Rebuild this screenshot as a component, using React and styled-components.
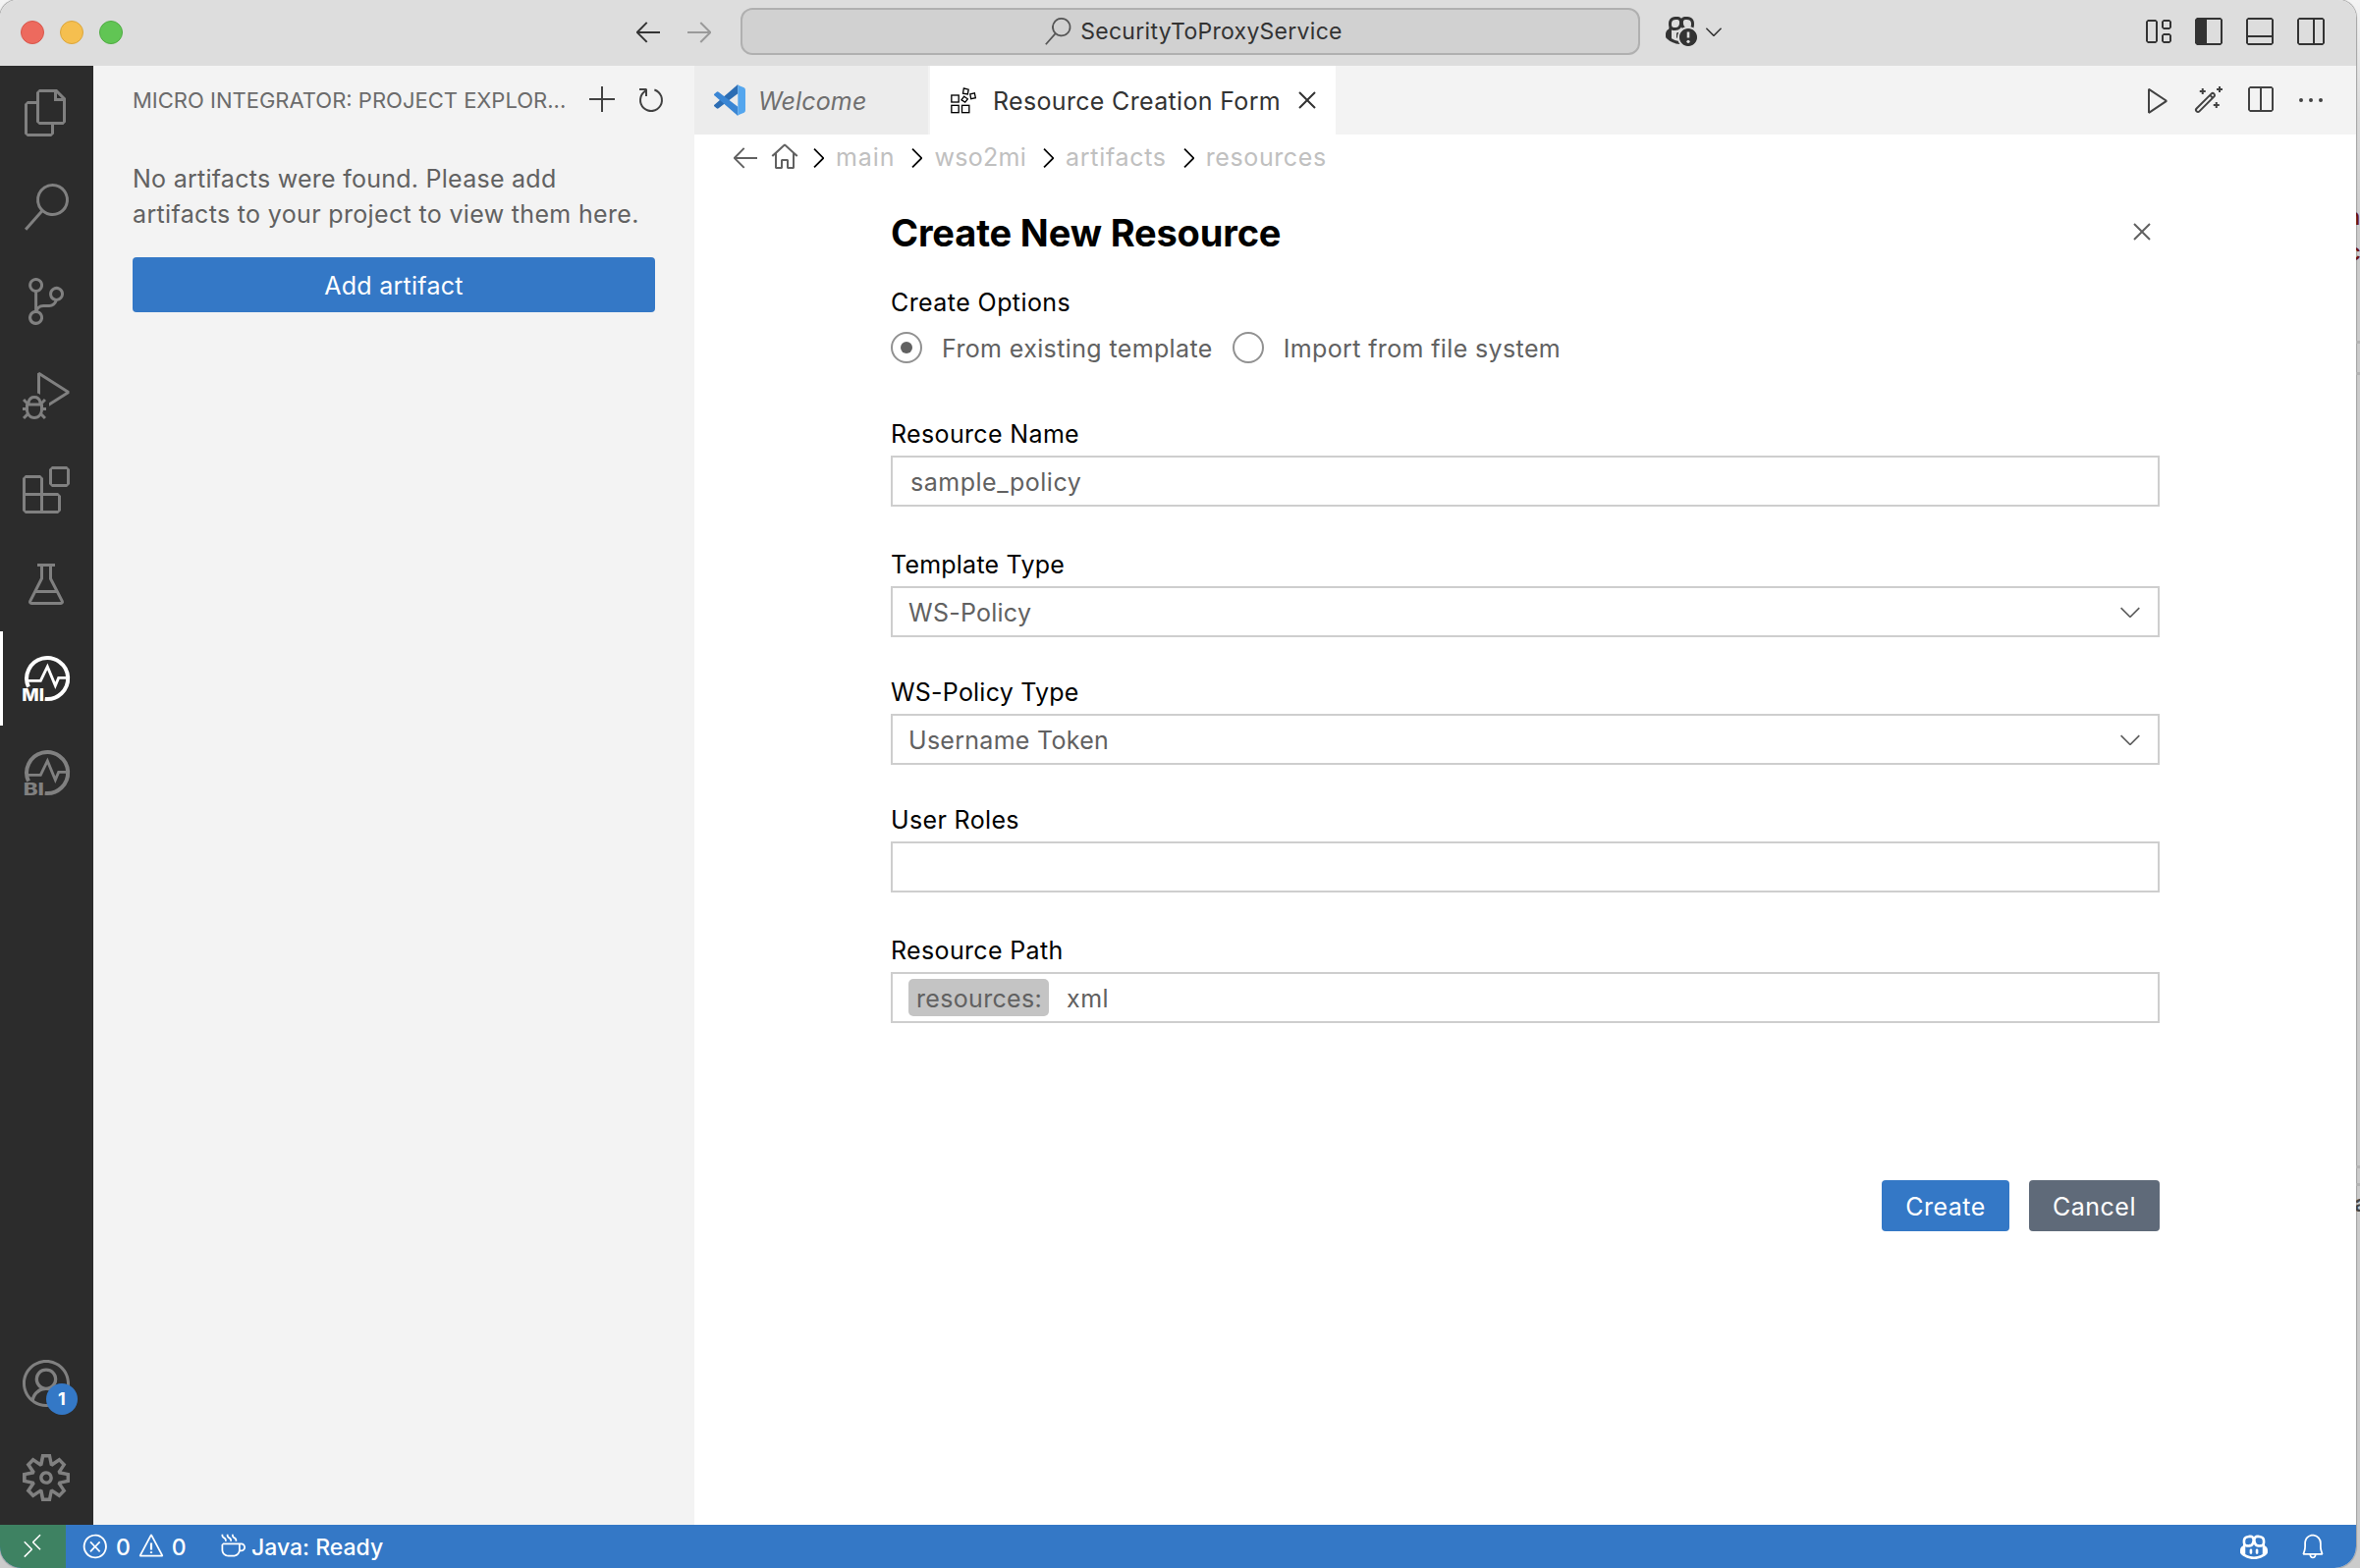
import React from "react";
import styled, { createGlobalStyle, css } from "styled-components";
import {
  VscAccount,
  VscAdd,
  VscArrowLeft,
  VscArrowRight,
  VscBeaker,
  VscBell,
  VscChevronDown,
  VscChevronRight,
  VscClose,
  VscCoffee,
  VscCopilot,
  VscCopilotWarning,
  VscDebugAlt,
  VscEllipsis,
  VscError,
  VscExtensions,
  VscFiles,
  VscHome,
  VscLayout,
  VscLayoutPanelOff,
  VscLayoutSidebarLeft,
  VscLayoutSidebarRightOff,
  VscPlay,
  VscRefresh,
  VscRemote,
  VscSearch,
  VscSettingsGear,
  VscSourceControl,
  VscSplitHorizontal,
  VscWand,
  VscWarning,
} from "react-icons/vsc";

const GlobalStyle = createGlobalStyle`
  * { box-sizing: border-box; }
  html, body { margin: 0; padding: 0; }
  body {
    background: #c9c9c9;
    font-family: Inter, "Liberation Sans", sans-serif;
    font-size: 25px;
    overflow: hidden;
  }
  svg { display: block; flex: none; overflow: visible; }
`;

const Desktop = styled.div`
  display: flex;
  width: 2403px;
  height: 1597px;
  background: linear-gradient(#f4f4f4 0, #d9d9d9 120px, #cbcbcb 240px, #cbcbcb 100%);
`;

const Window = styled.div`
  display: flex;
  flex-direction: column;
  width: 2399px;
  height: 1597px;
  border-radius: 18px 18px 22px 22px;
  overflow: hidden;
  background: #fff;
  box-shadow: 0 0 1px 1px #a2a2a2;
`;

const Backdrop = styled.div`
  flex: 1;
  display: flex;
  flex-direction: column;
  height: 1597px;
  overflow: hidden;
`;

const BackdropText = styled.span`
  height: 36px;
  margin-top: ${(p) => p.$top}px;
  text-indent: ${(p) => p.$shift}px;
  font-size: 24px;
  line-height: 36px;
  font-weight: ${(p) => p.$weight || 500};
  color: ${(p) => p.$color};
`;

const BackdropRule = styled.span`
  height: 3px;
  margin-top: ${(p) => p.$top}px;
  background: #b3b3b3;
`;

/* Title bar */

const TitleBar = styled.header`
  display: flex;
  align-items: center;
  height: 67px;
  padding: 0 30px 3px 21px;
  background: #dddddd;
  color: #333;
`;

const TrafficLights = styled.div`
  display: flex;
  gap: 16px;
  width: 104px;
  padding-top: 2px;
`;

const Light = styled.span`
  width: 24px;
  height: 24px;
  border-radius: 50%;
  background: ${(p) => p.$fill};
  border: 1px solid ${(p) => p.$edge};
`;

const History = styled.nav`
  display: flex;
  gap: 20px;
  margin-left: 519px;
`;

const Dim = styled.span`
  color: #9a9a9a;
`;

const CommandCenter = styled.div`
  display: flex;
  align-items: center;
  justify-content: center;
  gap: 9px;
  width: 916px;
  height: 48px;
  margin-left: 26px;
  padding-left: 6px;
  border: 2px solid #b0b0b0;
  border-radius: 12px;
  background: #d1d1d1;
  font-size: 23px;
  letter-spacing: 0.28px;
`;

const CopilotMenu = styled.div`
  display: flex;
  align-items: center;
  gap: 4px;
  margin-left: 26px;
`;

const LayoutActions = styled.div`
  display: flex;
  gap: 20px;
  margin-left: auto;
`;

/* Body */

const Workbench = styled.div`
  display: flex;
  flex: 1;
  min-height: 0;
`;

const ActivityBar = styled.aside`
  display: flex;
  flex-direction: column;
  width: 95px;
  background: #2c2c2c;
`;

const Spacer = styled.div`
  flex: 1;
`;

const Activity = styled.div`
  position: relative;
  display: flex;
  align-items: center;
  justify-content: center;
  height: 96px;
  padding-right: 1px;
  color: ${(p) => (p.$active ? "#fff" : "#808080")};
  ${(p) =>
    p.$active &&
    css`
      box-shadow: inset 3px 0 0 #fff;
    `}
`;

const Badge = styled.span`
  position: absolute;
  left: 47px;
  top: 48px;
  width: 32px;
  height: 32px;
  border-radius: 50%;
  background: #3478c6;
  color: #fff;
  font-size: 18px;
  font-weight: 700;
  line-height: 32px;
  text-align: center;
`;

const Sidebar = styled.section`
  width: 612px;
  padding: 0 0 0 40px;
  background: #f3f3f3;
  color: #616161;
`;

const SidebarHeader = styled.div`
  display: flex;
  align-items: center;
  height: 70px;
  color: #424242;
`;

const SidebarTitle = styled.h2`
  flex: none;
  width: 463px;
  margin: 0;
  font-size: 22px;
  font-weight: 400;
  line-height: 36px;
  white-space: nowrap;
  color: #6b6b6b;
`;

const SidebarActions = styled.div`
  display: flex;
  gap: 17px;
`;

const EmptyNote = styled.p`
  margin: 27px 0 0;
`;

const NoteLine = styled.span`
  display: block;
  line-height: 36px;
  letter-spacing: ${(p) => p.$tracking}px;
  white-space: nowrap;
`;

const Button = styled.button`
  display: flex;
  align-items: center;
  justify-content: center;
  width: ${(p) => p.$width}px;
  height: ${(p) => p.$height || 52}px;
  padding: 2px 0 0;
  border: 0;
  border-radius: 4px;
  background: ${(p) => (p.$secondary ? "#5f6a79" : "#3478c6")};
  color: #fff;
  font: inherit;
  letter-spacing: ${(p) => p.$tracking || 0.5}px;
`;

const SidebarButtonSlot = styled.div`
  margin-top: 26px;
`;

const Editor = styled.main`
  display: flex;
  flex-direction: column;
  flex: 1;
  background: #fff;
`;

const TabStrip = styled.div`
  display: flex;
  height: 70px;
  padding-right: 30px;
  background: #f3f3f3;
`;

const Tab = styled.div`
  display: flex;
  align-items: center;
  width: ${(p) => p.$width}px;
  padding-left: ${(p) => (p.$active ? 21 : 20)}px;
  background: ${(p) => (p.$active ? "#fff" : "#ececec")};
  color: ${(p) => (p.$active ? "#333" : "#6f6f6f")};
  font-style: ${(p) => (p.$preview ? "italic" : "normal")};
  border-right: ${(p) => (p.$active ? 0 : 2)}px solid #f3f3f3;
`;

const TabLabel = styled.span`
  margin: 1px 11px 0 ${(p) => p.$gap}px;
  letter-spacing: ${(p) => p.$tracking}px;
  white-space: nowrap;
`;

const EditorActions = styled.div`
  display: flex;
  align-items: center;
  gap: 20px;
  margin-left: auto;
  color: #424242;
`;

const Breadcrumbs = styled.nav`
  display: flex;
  align-items: center;
  height: 46px;
  padding: 0 0 1px 36px;
  color: #616161;
`;

const HomeSlot = styled.span`
  margin: 0 2px 0 8px;
`;

const Crumb = styled.span`
  display: flex;
  align-items: center;
  gap: 2px;
  margin-right: 6px;
  color: #c0c0c0;
  letter-spacing: ${(p) => p.$tracking}px;

  svg {
    margin-top: 3px;
    color: #000;
  }
`;

/* Form */

const Form = styled.form`
  display: flex;
  flex-direction: column;
  width: 1292px;
  margin: 30px 0 0 200px;
`;

const FormHeader = styled.div`
  display: flex;
  justify-content: space-between;
  height: 48px;
  padding: 0 2px 0 0;
  color: #616161;

  svg {
    margin-top: 7px;
  }
`;

const FormTitle = styled.h1`
  margin: 0;
  color: #000;
  font-size: 38px;
  font-weight: 700;
  line-height: 48px;
  letter-spacing: -0.15px;
`;

const Label = styled.label`
  display: block;
  line-height: 36px;
  letter-spacing: ${(p) => p.$tracking || 0.35}px;
  color: #000;
`;

const RadioSection = styled.div`
  margin: 29px 0 54px;
`;

const RadioRow = styled.div`
  display: flex;
  gap: 20px;
  margin-top: 12px;
`;

const RadioOption = styled.div`
  display: flex;
  align-items: center;
  gap: 20px;
  height: 32px;
  color: #616161;
`;

const RadioText = styled.span`
  margin-top: 2px;
  letter-spacing: 0.37px;
`;

const RadioDot = styled.span`
  display: flex;
  align-items: center;
  justify-content: center;
  width: 32px;
  height: 32px;
  border: 2px solid #919191;
  border-radius: 50%;

  &::after {
    content: "";
    width: 12px;
    height: 12px;
    border-radius: 50%;
    background: ${(p) => (p.$checked ? "#616161" : "transparent")};
  }
`;

const FieldGroup = styled.div`
  margin-bottom: ${(p) => p.$after}px;
`;

const FieldBox = styled.div`
  display: flex;
  align-items: center;
  height: 52px;
  margin-top: 4px;
  padding: 0 12px 0 ${(p) => p.$inset || 16}px;
  border: 2px solid #cecece;
  color: #616161;

  svg {
    margin-left: auto;
  }
`;

const FieldValue = styled.span`
  margin-top: 2px;
  letter-spacing: ${(p) => p.$tracking || 0.28}px;
`;

const Chip = styled.span`
  height: 38px;
  width: 143px;
  margin-right: 18px;
  border-radius: 5px;
  background: #c4c4c4;
  text-align: center;
  text-indent: 1px;
  line-height: 40px;
  letter-spacing: 0.32px;
`;

const FormActions = styled.div`
  display: flex;
  justify-content: flex-end;
  gap: 20px;
  margin-top: 160px;
`;

/* Status bar */

const StatusBar = styled.footer`
  display: flex;
  align-items: center;
  height: 44px;
  padding-right: 30px;
  background: #3478c6;
  color: #fff;
  font-size: 23px;
  font-weight: 500;
`;

const RemoteButton = styled.div`
  display: flex;
  align-items: center;
  justify-content: center;
  width: 67px;
  height: 44px;
  padding-right: 1px;
  background: #3e8262;
`;

const StatusText = styled.span`
  margin-top: 2px;
`;

const Problems = styled.div`
  display: flex;
  align-items: center;
  gap: 7px;
  margin-left: 16px;
  width: 139px;
`;

const JavaStatus = styled.div`
  display: flex;
  align-items: center;
  gap: 6px;
`;

const StatusRight = styled.div`
  display: flex;
  gap: 32px;
  margin-left: auto;
`;

function CopilotAlert() {
  return (
    <svg width="32" height="32" viewBox="0 0 32 32">
      <VscCopilotWarning width={32} height={32} size={32} />
      <circle cx="23" cy="22" r="8.6" fill="currentColor" />
      <path d="M23 16.5v6" stroke="#ddd" strokeWidth="2.6" />
      <circle cx="23" cy="26.3" r="1.6" fill="#ddd" />
    </svg>
  );
}

function VSCodeLogo() {
  return (
    <svg width="32" height="32" viewBox="0 0 96 96">
      <path d="M0 66 8 73Q11 75 14 73L73 28V0L3 61Q-1 63 0 66Z" fill="#2c6db3" />
      <path d="M0 30 8 23Q11 21 14 23L73 68V96L3 35Q-1 33 0 30Z" fill="#3a86d4" />
      <path d="M68 0 92 10Q96 12 96 17V79Q96 84 92 86L68 96Q73 94 73 90V6Q73 2 68 0Z" fill="#54a6ee" />
    </svg>
  );
}

function ResourceIcon() {
  return (
    <svg width="26" height="27" viewBox="0 0 78 80" fill="none" stroke="#000" strokeWidth="4">
      <rect x="2.5" y="23.5" width="22" height="21" />
      <rect x="2.5" y="54.5" width="22" height="22" />
      <rect x="34.5" y="54.5" width="22" height="22" />
      <path d="M40 2.5 54.5 6 52 20.500 37.500 18Z" />
      <path d="M59.500 20 73 17 76 31.500 62 34.500Z" />
      <path d="M41 27 52 35 44 45 33 38Z" />
    </svg>
  );
}

/* Circle with a pulse line; the product initials sit in its open lower-left corner. */
function PulseIcon({ initials, x, width }) {
  return (
    <svg width="48" height="48" viewBox="0 0 144 144">
      <path
        d="M18 98A63 63 0 1 1 68 134.600"
        fill="none"
        stroke="currentColor"
        strokeWidth="12"
      />
      <path
        d="M18 79H55L76 36 100 94 110 70H134"
        fill="none"
        stroke="currentColor"
        strokeWidth="8.500"
      />
      <text
        x={x}
        y="140"
        fill="currentColor"
        fontFamily="Inter, sans-serif"
        fontSize="50"
        fontWeight="800"
        textLength={width}
        lengthAdjust="spacingAndGlyphs"
      >
        {initials}
      </text>
    </svg>
  );
}

const topActivities = [
  VscFiles,
  VscSearch,
  VscSourceControl,
  VscDebugAlt,
  VscExtensions,
  VscBeaker,
];

const crumbs = [
  ["main", 0.9],
  ["wso2mi", 0.3],
  ["artifacts", 0.7],
  ["resources", 0.6],
];

export default function App() {
  return (
    <Desktop>
      <GlobalStyle />
      <Window>
        <TitleBar>
          <TrafficLights>
            <Light $fill="#ed6a5e" $edge="#d8564b" />
            <Light $fill="#f5bf4f" $edge="#dba63c" />
            <Light $fill="#61c554" $edge="#50ac43" />
          </TrafficLights>
          <History>
            <VscArrowLeft size={32} />
            <Dim>
              <VscArrowRight size={32} />
            </Dim>
          </History>
          <CommandCenter>
            <VscSearch size={28} color="#555" />
            <span>SecurityToProxyService</span>
          </CommandCenter>
          <CopilotMenu>
            <CopilotAlert />
            <VscChevronDown size={26} />
          </CopilotMenu>
          <LayoutActions>
            <VscLayout size={32} />
            <VscLayoutSidebarLeft size={32} />
            <VscLayoutPanelOff size={32} />
            <VscLayoutSidebarRightOff size={32} />
          </LayoutActions>
        </TitleBar>

        <Workbench>
          <ActivityBar>
            {topActivities.map((Icon, i) => (
              <Activity key={i}>
                <Icon size={48} />
              </Activity>
            ))}
            <Activity $active>
              <PulseIcon initials="MI" x="-2" width="68" />
            </Activity>
            <Activity>
              <PulseIcon initials="BI" x="2" width="64" />
            </Activity>
            <Spacer />
            <Activity>
              <VscAccount size={48} />
              <Badge>1</Badge>
            </Activity>
            <Activity>
              <VscSettingsGear size={48} />
            </Activity>
          </ActivityBar>

          <Sidebar>
            <SidebarHeader>
              <SidebarTitle>MICRO INTEGRATOR: PROJECT EXPLOR...</SidebarTitle>
              <SidebarActions>
                <VscAdd size={32} />
                <VscRefresh size={32} />
              </SidebarActions>
            </SidebarHeader>
            <EmptyNote>
              <NoteLine $tracking={0.26}>No artifacts were found. Please add</NoteLine>
              <NoteLine $tracking={0.34}>
                artifacts to your project to view them here.
              </NoteLine>
            </EmptyNote>
            <SidebarButtonSlot>
              <Button type="button" $width={532} $height={56} $tracking={0.26}>
                Add artifact
              </Button>
            </SidebarButtonSlot>
          </Sidebar>

          <Editor>
            <TabStrip>
              <Tab $width={240} $preview>
                <VSCodeLogo />
                <TabLabel $gap={13} $tracking={0.15}>
                  Welcome
                </TabLabel>
              </Tab>
              <Tab $width={413} $active>
                <ResourceIcon />
                <TabLabel $gap={17} $tracking={0.33}>
                  Resource Creation Form
                </TabLabel>
                <VscClose size={32} />
              </Tab>
              <EditorActions>
                <VscPlay size={32} />
                <VscWand size={32} />
                <VscSplitHorizontal size={32} />
                <VscEllipsis size={32} />
              </EditorActions>
            </TabStrip>

            <Breadcrumbs>
              <VscArrowLeft size={32} />
              <HomeSlot>
                <VscHome size={32} />
              </HomeSlot>
              {crumbs.map(([name, tracking]) => (
                <Crumb key={name} $tracking={tracking}>
                  <VscChevronRight size={32} />
                  {name}
                </Crumb>
              ))}
            </Breadcrumbs>

            <Form>
              <FormHeader>
                <FormTitle>Create New Resource</FormTitle>
                <VscClose size={32} />
              </FormHeader>

              <RadioSection>
                <Label $tracking={0.42}>Create Options</Label>
                <RadioRow>
                  <RadioOption>
                    <RadioDot $checked />
                    <RadioText>From existing template</RadioText>
                  </RadioOption>
                  <RadioOption>
                    <RadioDot />
                    <RadioText>Import from file system</RadioText>
                  </RadioOption>
                </RadioRow>
              </RadioSection>

              <FieldGroup $after={41}>
                <Label>Resource Name</Label>
                <FieldBox $inset={18}>
                  <FieldValue $tracking={0.52}>sample_policy</FieldValue>
                </FieldBox>
              </FieldGroup>

              <FieldGroup $after={38}>
                <Label $tracking={0.22}>Template Type</Label>
                <FieldBox>
                  <FieldValue $tracking={0.25}>WS-Policy</FieldValue>
                  <VscChevronDown size={32} />
                </FieldBox>
              </FieldGroup>

              <FieldGroup $after={38}>
                <Label $tracking={0.22}>WS-Policy Type</Label>
                <FieldBox>
                  <FieldValue>Username Token</FieldValue>
                  <VscChevronDown size={32} />
                </FieldBox>
              </FieldGroup>

              <FieldGroup $after={41}>
                <Label>User Roles</Label>
                <FieldBox />
              </FieldGroup>

              <FieldGroup $after={0}>
                <Label>Resource Path</Label>
                <FieldBox>
                  <Chip>resources:</Chip>
                  <FieldValue $tracking={0.5}>xml</FieldValue>
                </FieldBox>
              </FieldGroup>

              <FormActions>
                <Button type="button" $width={130}>
                  Create
                </Button>
                <Button type="button" $width={133} $secondary>
                  Cancel
                </Button>
              </FormActions>
            </Form>
          </Editor>
        </Workbench>

        <StatusBar>
          <RemoteButton>
            <VscRemote size={28} />
          </RemoteButton>
          <Problems>
            <VscError size={28} />
            <StatusText>0</StatusText>
            <VscWarning size={28} />
            <StatusText>0</StatusText>
          </Problems>
          <JavaStatus>
            <VscCoffee size={28} />
            <StatusText>Java: Ready</StatusText>
          </JavaStatus>
          <StatusRight>
            <VscCopilot size={28} />
            <VscBell size={28} />
          </StatusRight>
        </StatusBar>
      </Window>
      <Backdrop>
        <BackdropText $top={203} $shift={-10} $color="#6e1414">n</BackdropText>
        <BackdropText $top={0} $shift={-9} $color="#6e1414">c</BackdropText>
        <BackdropRule $top={72} />
        <BackdropRule $top={29} />
        <BackdropRule $top={805} />
        <BackdropRule $top={15} />
        <BackdropText $top={0} $shift={-2} $weight={600} $color="#444">a</BackdropText>
      </Backdrop>
    </Desktop>
  );
}
